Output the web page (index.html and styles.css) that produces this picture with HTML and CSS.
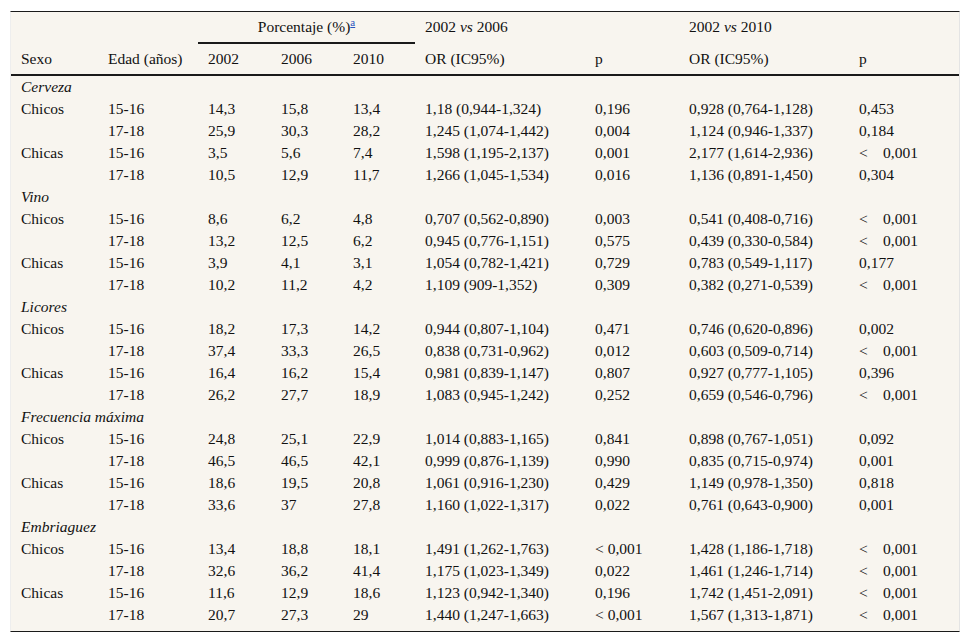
FILE: index.html
```html
<!DOCTYPE html>
<html lang="es">
<head>
<meta charset="utf-8">
<title>Tabla</title>
<link rel="stylesheet" href="styles.css">
</head>
<body>
<div class="wrap">
<table class="data">
<colgroup>
<col class="c1"><col class="c2"><col class="c3"><col class="c4"><col class="c5"><col class="c6"><col class="c7"><col class="c8"><col class="c9">
</colgroup>
<thead>
<tr class="h1">
<th></th><th></th>
<th colspan="3" class="group">Porcentaje (%)<sup><a href="#">a</a></sup></th>
<th>2002 <i>vs</i> 2006</th><th></th>
<th>2002 <i>vs</i> 2010</th><th></th>
</tr>
<tr class="h2">
<th>Sexo</th><th>Edad (años)</th><th>2002</th><th>2006</th><th>2010</th><th>OR (IC95%)</th><th>p</th><th>OR (IC95%)</th><th>p</th>
</tr>
</thead>
<tbody>
<tr><td colspan="9" class="cat">Cerveza</td></tr>
<tr><td>Chicos</td><td>15-16</td><td>14,3</td><td>15,8</td><td>13,4</td><td>1,18 (0,944-1,324)</td><td>0,196</td><td>0,928 (0,764-1,128)</td><td>0,453</td></tr>
<tr><td></td><td>17-18</td><td>25,9</td><td>30,3</td><td>28,2</td><td>1,245 (1,074-1,442)</td><td>0,004</td><td>1,124 (0,946-1,337)</td><td>0,184</td></tr>
<tr><td>Chicas</td><td>15-16</td><td>3,5</td><td>5,6</td><td>7,4</td><td>1,598 (1,195-2,137)</td><td>0,001</td><td>2,177 (1,614-2,936)</td><td><span class="lt">&lt;</span>0,001</td></tr>
<tr><td></td><td>17-18</td><td>10,5</td><td>12,9</td><td>11,7</td><td>1,266 (1,045-1,534)</td><td>0,016</td><td>1,136 (0,891-1,450)</td><td>0,304</td></tr>
<tr><td colspan="9" class="cat">Vino</td></tr>
<tr><td>Chicos</td><td>15-16</td><td>8,6</td><td>6,2</td><td>4,8</td><td>0,707 (0,562-0,890)</td><td>0,003</td><td>0,541 (0,408-0,716)</td><td><span class="lt">&lt;</span>0,001</td></tr>
<tr><td></td><td>17-18</td><td>13,2</td><td>12,5</td><td>6,2</td><td>0,945 (0,776-1,151)</td><td>0,575</td><td>0,439 (0,330-0,584)</td><td><span class="lt">&lt;</span>0,001</td></tr>
<tr><td>Chicas</td><td>15-16</td><td>3,9</td><td>4,1</td><td>3,1</td><td>1,054 (0,782-1,421)</td><td>0,729</td><td>0,783 (0,549-1,117)</td><td>0,177</td></tr>
<tr><td></td><td>17-18</td><td>10,2</td><td>11,2</td><td>4,2</td><td>1,109 (909-1,352)</td><td>0,309</td><td>0,382 (0,271-0,539)</td><td><span class="lt">&lt;</span>0,001</td></tr>
<tr><td colspan="9" class="cat">Licores</td></tr>
<tr><td>Chicos</td><td>15-16</td><td>18,2</td><td>17,3</td><td>14,2</td><td>0,944 (0,807-1,104)</td><td>0,471</td><td>0,746 (0,620-0,896)</td><td>0,002</td></tr>
<tr><td></td><td>17-18</td><td>37,4</td><td>33,3</td><td>26,5</td><td>0,838 (0,731-0,962)</td><td>0,012</td><td>0,603 (0,509-0,714)</td><td><span class="lt">&lt;</span>0,001</td></tr>
<tr><td>Chicas</td><td>15-16</td><td>16,4</td><td>16,2</td><td>15,4</td><td>0,981 (0,839-1,147)</td><td>0,807</td><td>0,927 (0,777-1,105)</td><td>0,396</td></tr>
<tr><td></td><td>17-18</td><td>26,2</td><td>27,7</td><td>18,9</td><td>1,083 (0,945-1,242)</td><td>0,252</td><td>0,659 (0,546-0,796)</td><td><span class="lt">&lt;</span>0,001</td></tr>
<tr><td colspan="9" class="cat">Frecuencia máxima</td></tr>
<tr><td>Chicos</td><td>15-16</td><td>24,8</td><td>25,1</td><td>22,9</td><td>1,014 (0,883-1,165)</td><td>0,841</td><td>0,898 (0,767-1,051)</td><td>0,092</td></tr>
<tr><td></td><td>17-18</td><td>46,5</td><td>46,5</td><td>42,1</td><td>0,999 (0,876-1,139)</td><td>0,990</td><td>0,835 (0,715-0,974)</td><td>0,001</td></tr>
<tr><td>Chicas</td><td>15-16</td><td>18,6</td><td>19,5</td><td>20,8</td><td>1,061 (0,916-1,230)</td><td>0,429</td><td>1,149 (0,978-1,350)</td><td>0,818</td></tr>
<tr><td></td><td>17-18</td><td>33,6</td><td>37</td><td>27,8</td><td>1,160 (1,022-1,317)</td><td>0,022</td><td>0,761 (0,643-0,900)</td><td>0,001</td></tr>
<tr><td colspan="9" class="cat">Embriaguez</td></tr>
<tr><td>Chicos</td><td>15-16</td><td>13,4</td><td>18,8</td><td>18,1</td><td>1,491 (1,262-1,763)</td><td>&lt; 0,001</td><td>1,428 (1,186-1,718)</td><td><span class="lt">&lt;</span>0,001</td></tr>
<tr><td></td><td>17-18</td><td>32,6</td><td>36,2</td><td>41,4</td><td>1,175 (1,023-1,349)</td><td>0,022</td><td>1,461 (1,246-1,714)</td><td><span class="lt">&lt;</span>0,001</td></tr>
<tr><td>Chicas</td><td>15-16</td><td>11,6</td><td>12,9</td><td>18,6</td><td>1,123 (0,942-1,340)</td><td>0,196</td><td>1,742 (1,451-2,091)</td><td><span class="lt">&lt;</span>0,001</td></tr>
<tr class="last"><td></td><td>17-18</td><td>20,7</td><td>27,3</td><td>29</td><td>1,440 (1,247-1,663)</td><td>&lt; 0,001</td><td>1,567 (1,313-1,871)</td><td><span class="lt">&lt;</span>0,001</td></tr>
</tbody>
</table>
</div>
</body>
</html>
```

FILE: styles.css
```css
html, body {
  margin: 0;
  padding: 0;
  background: #ffffff;
}

body {
  padding: 11px 0 0 10px;
  font-family: "Liberation Serif", "Times New Roman", serif;
  font-size: 15.5px;
  color: #111111;
}

.wrap {
  width: 948px;
  background: #f8f5ef;
  border-top: 1px solid #1a1a1a;
  border-bottom: 1px solid #1a1a1a;
  border-left: 1px solid #eeeeee;
  border-right: 1px solid #e4e4e4;
  padding-bottom: 5px;
}

.data {
  width: 948px;
  table-layout: fixed;
  border-collapse: separate;
  border-spacing: 0;
  font-family: "Liberation Serif", "Times New Roman", serif;
  font-size: 15.5px;
}

.c1 { width: 87px; }
.c2 { width: 100px; }
.c3 { width: 73px; }
.c4 { width: 72px; }
.c5 { width: 72px; }
.c6 { width: 170px; }
.c7 { width: 94px; }
.c8 { width: 170px; }
.c9 { width: 110px; }

.data th,
.data td {
  padding: 0 0 0 10px;
  text-align: left;
  font-family: "Liberation Serif", "Times New Roman", serif;
  font-weight: normal;
  white-space: nowrap;
  vertical-align: middle;
}

.h1 th {
  height: 30px;
  border-bottom: 2px solid transparent;
}

.h1 th.group {
  text-align: center;
  padding-left: 0;
  border-bottom-color: #1a1a1a;
}

.h2 th {
  height: 30px;
  border-bottom: 2px solid #1a1a1a;
}

.data tbody td {
  height: 22px;
  line-height: 22px;
}

.data td.cat {
  font-style: italic;
}

sup {
  font-size: 11px;
  line-height: 0;
  vertical-align: 6px;
}

sup a {
  color: #2a55c0;
  text-decoration: underline;
}

.lt {
  display: inline-block;
  width: 24px;
}
```
